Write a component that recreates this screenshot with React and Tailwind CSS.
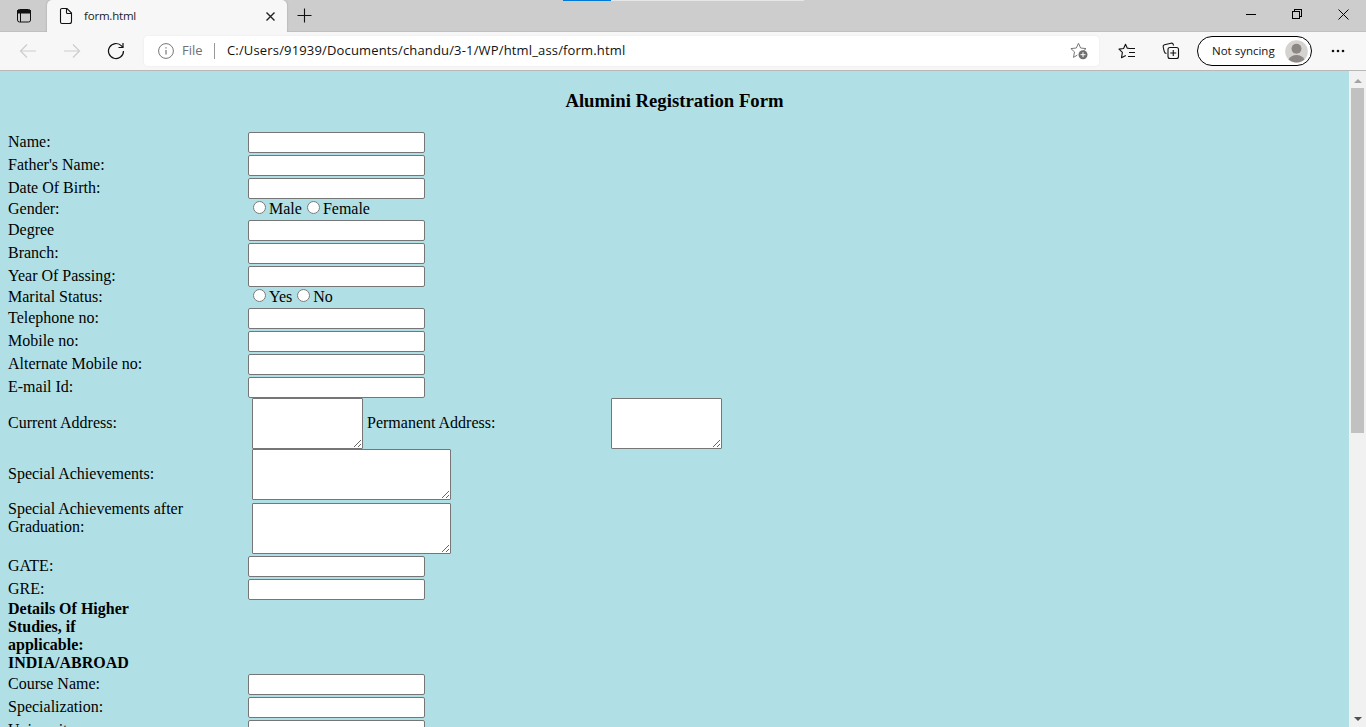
import React from 'react';

const UI = "font-['Open_Sans','Noto_Sans',sans-serif]";

function TabStrip() {
  return (
    <div className="relative flex h-8 shrink-0 bg-[#cdcdcd] shadow-[inset_0_-1px_0_#c0c0c0]">
      <div className="flex w-[47px] items-center justify-center">
        <svg width="16" height="16" viewBox="0 0 16 16" fill="none" stroke="#111" className="ml-px">
          <rect x="1.5" y="1.5" width="13" height="12.5" rx="2" />
          <path d="M1.5 2.5h13v2.5h-13z" fill="#111" />
          <path d="M4.5 5v9" />
        </svg>
      </div>
      <div className="flex w-60 items-center rounded-t-[5px] bg-[#f7f7f7] pl-3 pr-[11px] shadow-[0_0_2px_#999] [clip-path:inset(0_-3px_0_-3px)]">
        <svg width="14" height="18" viewBox="0 0 14 18" fill="none" stroke="#111" strokeWidth="1.1">
          <path d="M3 1.5h5l4.5 4.5v8.5a2 2 0 0 1-2 2H3a1.5 1.5 0 0 1-1.500-1.500V3A1.500 1.500 0 0 1 3 1.500z" />
          <path d="M7.500 1.500v4a1 1 0 0 0 1 1h4" />
        </svg>
        <span className="ml-[11px] flex-1 text-[11.500px] leading-4 tracking-[-0.2px] text-[#222]">form.html</span>
        <svg width="11" height="11" viewBox="0 0 11 11" stroke="#222" strokeWidth="1.4">
          <path d="M1.500 1.500l8 8M9.500 1.500l-8 8" />
        </svg>
      </div>
      <div className="flex items-center pl-2.5">
        <svg width="16" height="16" viewBox="0 0 16 16" stroke="#111" strokeWidth="1.1">
          <path d="M.5 7.500h14M7.500 .5v14" />
        </svg>
      </div>
      <div className="absolute left-[563px] top-0 flex h-px w-[241px] bg-[#e6e6e6]">
        <div className="h-px w-12 bg-[#0078d7]" />
      </div>
      <div className="ml-auto flex items-center gap-9 pb-1 pr-[17px]">
        <svg width="10" height="10" viewBox="0 0 10 10" stroke="#000"><path d="M0 5.500h10" /></svg>
        <svg width="10" height="10" viewBox="0 0 10 10" fill="none" stroke="#000" shapeRendering="crispEdges">
          <path d="M.5 2.500h7v7h-7zM2.500 2.500v-2h7v7h-2" />
        </svg>
        <svg width="11" height="11" viewBox="0 0 11 11" stroke="#000"><path d="M.5 .5l10 10M10.500 .5l-10 10" /></svg>
      </div>
    </div>
  );
}

function Toolbar() {
  return (
    <div className="flex h-[39px] shrink-0 items-center border-b border-[#b8b8b8] bg-[#f7f7f7]">
      <svg width="18" height="16" viewBox="0 0 18 16" fill="none" stroke="#cdcdcd" strokeWidth="1.2" className="ml-[19px]">
        <path d="M17 8H1.500M8 1.500L1.500 8 8 14.500" />
      </svg>
      <svg width="18" height="16" viewBox="0 0 18 16" fill="none" stroke="#cdcdcd" strokeWidth="1.2" className="ml-[26px]">
        <path d="M1 8h15.500M10 1.500L16.500 8 10 14.500" />
      </svg>
      <svg width="18" height="18" viewBox="0 0 18 18" fill="none" stroke="#111" strokeWidth="1.200" className="ml-[26px]">
        <path d="M16.500 9A7.500 7.500 0 1 1 14.500 3.900L16 5.500" />
        <path d="M16 1v4.500h-4.500" />
      </svg>
      <div className="ml-[19px] flex h-[30px] w-[955px] items-center rounded bg-white pl-3.5 pr-2.5 shadow-[0_0_2px_#e4e4e4]">
        <svg width="16" height="16" viewBox="0 0 16 16" fill="none" stroke="#767676">
          <circle cx="8" cy="8" r="7.400" />
          <path d="M8 7v4.500M8 4.200v1.300" strokeWidth="1.200" />
        </svg>
        <span className="ml-2 w-[32px] text-[13px] text-[#707070]">File</span>
        <span className="h-4 w-px bg-[#999]" />
        <span className="ml-3 flex-1 whitespace-nowrap text-[13px] tracking-[0.160px] text-[#111]">
          C:/Users/91939/Documents/chandu/3-1/WP/html_ass/form.html
        </span>
        <svg width="19" height="18" viewBox="0 0 19 18" fill="none" stroke="#777">
          <path d="M8.500 1.300l2.100 4.700 5.400.6-3.700 3.500M7.300 13.100l-3.800 2.300 1-5.500L.9 6.600l5.400-.6 2.200-4.700" strokeLinejoin="round" />
          <circle cx="13" cy="12.700" r="4.500" fill="#6e6e6e" stroke="none" />
          <path d="M10.500 12.700h5M13 10.200v5" stroke="#fff" />
        </svg>
      </div>
      <svg width="18" height="17" viewBox="0 0 18 17" fill="none" stroke="#111" strokeWidth="1.100" className="ml-[19px]">
        <path d="M11 5.300L9.300 5.200 7.500 1.200 5.600 5.500 1 6.100l3.400 3.300-.9 5.300L7.800 12.500" strokeLinejoin="round" />
        <path d="M10.500 5.500H17M11 9.500h6M10 13.500h7" />
      </svg>
      <svg width="18" height="18" viewBox="0 0 18 18" fill="none" stroke="#111" strokeWidth="1.100" className="ml-[26px]">
        <path d="M4.500 11.500C3 11.500 2.500 10.500 2.200 9.300L1.200 5c-.3-1.200.3-2 1.300-2.300l6.500-1.500c1.200-.3 2 .2 2.300 1.300l.3 1" />
        <rect x="6" y="5.500" width="10.500" height="11" rx="2" />
        <path d="M11.250 8v6M8.250 11h6" />
      </svg>
      <div className="ml-[17px] flex h-[30px] w-[115px] items-center justify-between rounded-full border border-black bg-white pl-3.5 pr-[3px]">
        <span className="whitespace-nowrap text-[11.500px] text-[#111]">Not syncing</span>
        <svg width="23" height="23" viewBox="0 0 23 23">
          <circle cx="11.500" cy="11.500" r="11.300" fill="#d5d3d0" />
          <circle cx="11.500" cy="8.700" r="5" fill="#8c8784" />
          <path d="M3.500 19.500c1.500-3 4.500-4.500 8-4.500s6.500 1.500 8 4.500c-4.500 4-11.500 4-16 0z" fill="#8c8784" />
        </svg>
      </div>
      <svg width="14" height="4" viewBox="0 0 14 4" fill="#111" className="ml-[19px]">
        <circle cx="2" cy="2" r="1.300" /><circle cx="7" cy="2" r="1.300" /><circle cx="12" cy="2" r="1.300" />
      </svg>
    </div>
  );
}

function TextRow({ label }) {
  return (
    <label className="flex h-[23px] shrink-0 items-start">
      <span className="w-60 pt-0.5">{label}</span>
      <input type="text" className="mt-px h-[21px] w-[177px] rounded-[2px] border border-[#767676] bg-white" />
    </label>
  );
}

function RadioRow({ label, name, options }) {
  return (
    <div className="flex h-[19px] shrink-0 items-start">
      <span className="w-60">{label}</span>
      <div className="flex gap-[5px] pl-[5px]">
        {options.map((option) => (
          <label key={option} className="flex gap-[3px]">
            <input type="radio" name={name} className="mt-px size-[13px]" />
            {option}
          </label>
        ))}
      </div>
    </div>
  );
}

function Area({ wide }) {
  return (
    <textarea
      className={`h-[51px] shrink-0 resize rounded-[1px] border border-[#767676] bg-white ${wide ? 'w-[199px]' : 'w-[111px]'}`}
    />
  );
}

function Form() {
  return (
    <main className="flex min-w-0 flex-1 flex-col overflow-hidden bg-[#b0e0e6] pl-2 font-['Liberation_Serif',serif] text-[16px] leading-[18px] text-black">
      <h3 className="mb-[19px] mt-[19px] pr-2 text-center text-[18.720px] font-bold leading-[22px]">Alumini Registration Form</h3>
      <TextRow label="Name:" />
      <TextRow label="Father's Name:" />
      <TextRow label="Date Of Birth:" />
      <RadioRow label="Gender:" name="gender" options={['Male', 'Female']} />
      <TextRow label="Degree" />
      <TextRow label="Branch:" />
      <TextRow label="Year Of Passing:" />
      <RadioRow label="Marital Status:" name="marital" options={['Yes', 'No']} />
      <TextRow label="Telephone no:" />
      <TextRow label="Mobile no:" />
      <TextRow label="Alternate Mobile no:" />
      <TextRow label="E-mail Id:" />
      <div className="-mt-px flex h-[51px] shrink-0 items-start">
        <span className="w-[244px] pt-4">Current Address:</span>
        <Area />
        <span className="ml-1 w-[244px] pt-4">Permanent Address:</span>
        <Area />
      </div>
      <div className="flex h-[51px] shrink-0 items-start">
        <span className="w-[244px] pt-4">Special Achievements:</span>
        <Area wide />
      </div>
      <div className="flex h-[55px] shrink-0 items-start pt-[3px]">
        <span className="-mt-[3px] w-[244px] pr-10">Special Achievements after Graduation:</span>
        <Area wide />
      </div>
      <TextRow label="GATE:" />
      <TextRow label="GRE:" />
      <div className="-mt-px mb-px h-[72px] w-32 shrink-0 font-bold">Details Of Higher Studies, if applicable: INDIA/ABROAD</div>
      <TextRow label="Course Name:" />
      <TextRow label="Specialization:" />
      <TextRow label="University:" />
    </main>
  );
}

function Scrollbar() {
  return (
    <div className="flex w-[17px] shrink-0 flex-col items-center bg-[#f1f1f1]">
      <div className="flex h-[17px] items-center pt-0.5">
        <svg width="8" height="4" viewBox="0 0 8 4" fill="#a3a3a3"><path d="M4 0l4 4H0z" /></svg>
      </div>
      <div className="h-[345px] w-[13px] bg-[#c1c1c1]" />
      <div className="mt-auto flex h-[17px] items-center">
        <svg width="8" height="4" viewBox="0 0 8 4" fill="#505050"><path d="M0 0h8L4 4z" /></svg>
      </div>
    </div>
  );
}

export default function App() {
  return (
    <div className="flex h-[727px] w-[1366px] flex-col overflow-hidden">
      <header className={UI}>
        <TabStrip />
        <Toolbar />
      </header>
      <div className="flex min-h-0 flex-1">
        <Form />
        <Scrollbar />
      </div>
    </div>
  );
}
